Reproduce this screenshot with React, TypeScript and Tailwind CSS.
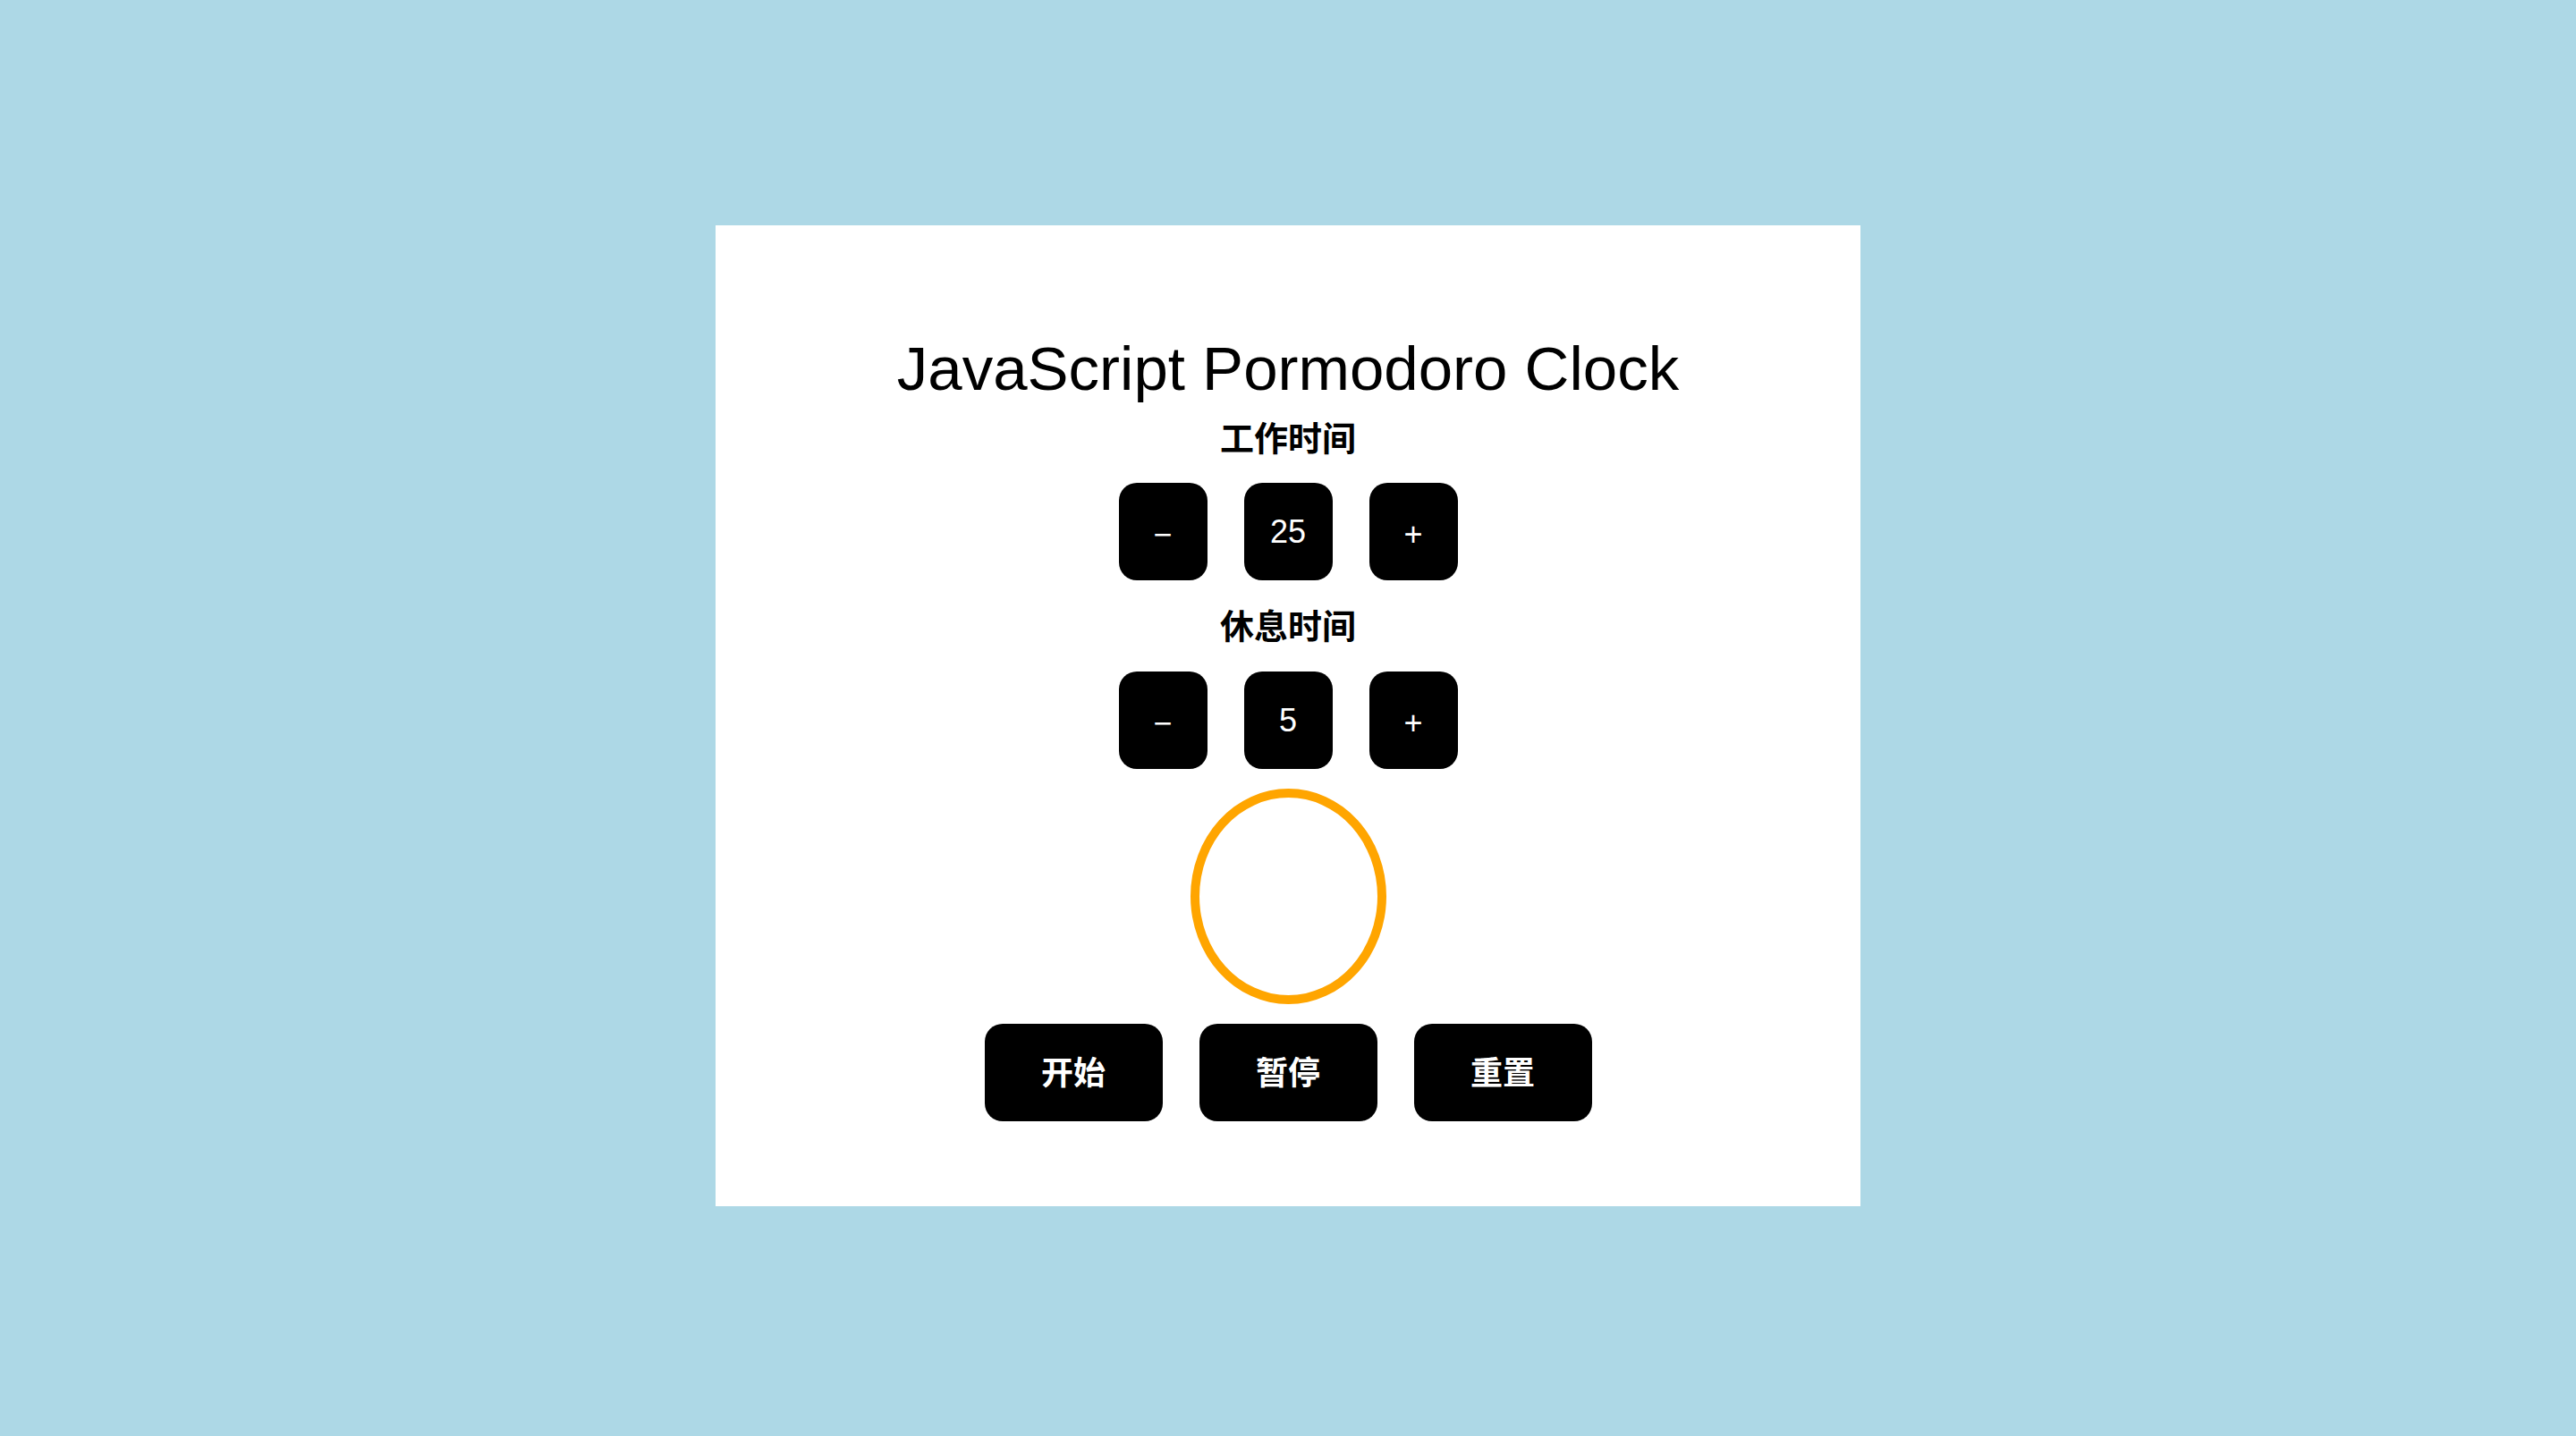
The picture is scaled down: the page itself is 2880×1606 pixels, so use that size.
import React from "react";

const latin = { fontFamily: '"Liberation Sans", Arial, "Noto Sans CJK SC", sans-serif' };
const cjk = { fontFamily: '"Liberation Sans", "Noto Sans CJK SC", sans-serif' };

function SmallBtn({ children, sym }: { children: React.ReactNode; sym?: boolean }) {
  return (
    <button
      className={
        sym
          ? "w-[99px] h-[109px] rounded-[20px] bg-black text-white text-[36px] leading-none flex items-center justify-center pt-[6px]"
          : "w-[99px] h-[109px] rounded-[20px] bg-black text-white text-[36px] leading-none flex items-center justify-center"
      }
      style={latin}
    >
      {children}
    </button>
  );
}

function BigBtn({ children }: { children: React.ReactNode }) {
  return (
    <button
      className="w-[199px] h-[109px] rounded-[20px] bg-black text-white text-[36px] font-semibold leading-none flex items-center justify-center pt-[3px]"
      style={cjk}
    >
      {children}
    </button>
  );
}

export default function App() {
  return (
    <div className="w-full min-h-screen bg-[#add8e6] flex justify-center pt-[252px]">
      <div className="w-[1280px] h-[1097px] bg-white flex flex-col items-center pt-[126px]">
        <h1 className="text-[69px] leading-[69px] text-black font-normal" style={latin}>
          JavaScript Pormodoro Clock
        </h1>
        <div className="mt-[25px] text-[38px] leading-[38px] font-semibold text-black" style={cjk}>
          工作时间
        </div>
        <div className="mt-[30px] flex gap-[41px]">
          <SmallBtn sym>−</SmallBtn>
          <SmallBtn>25</SmallBtn>
          <SmallBtn sym>+</SmallBtn>
        </div>
        <div className="mt-[33px] text-[38px] leading-[38px] font-semibold text-black" style={cjk}>
          休息时间
        </div>
        <div className="mt-[31px] flex gap-[41px]">
          <SmallBtn sym>−</SmallBtn>
          <SmallBtn>5</SmallBtn>
          <SmallBtn sym>+</SmallBtn>
        </div>
        <div className="mt-[22px] w-[219px] h-[241px] rounded-[50%] border-[10px] border-[#ffa500]" />
        <div className="mt-[22px] flex gap-[41px]">
          <BigBtn>开始</BigBtn>
          <BigBtn>暂停</BigBtn>
          <BigBtn>重置</BigBtn>
        </div>
      </div>
    </div>
  );
}
